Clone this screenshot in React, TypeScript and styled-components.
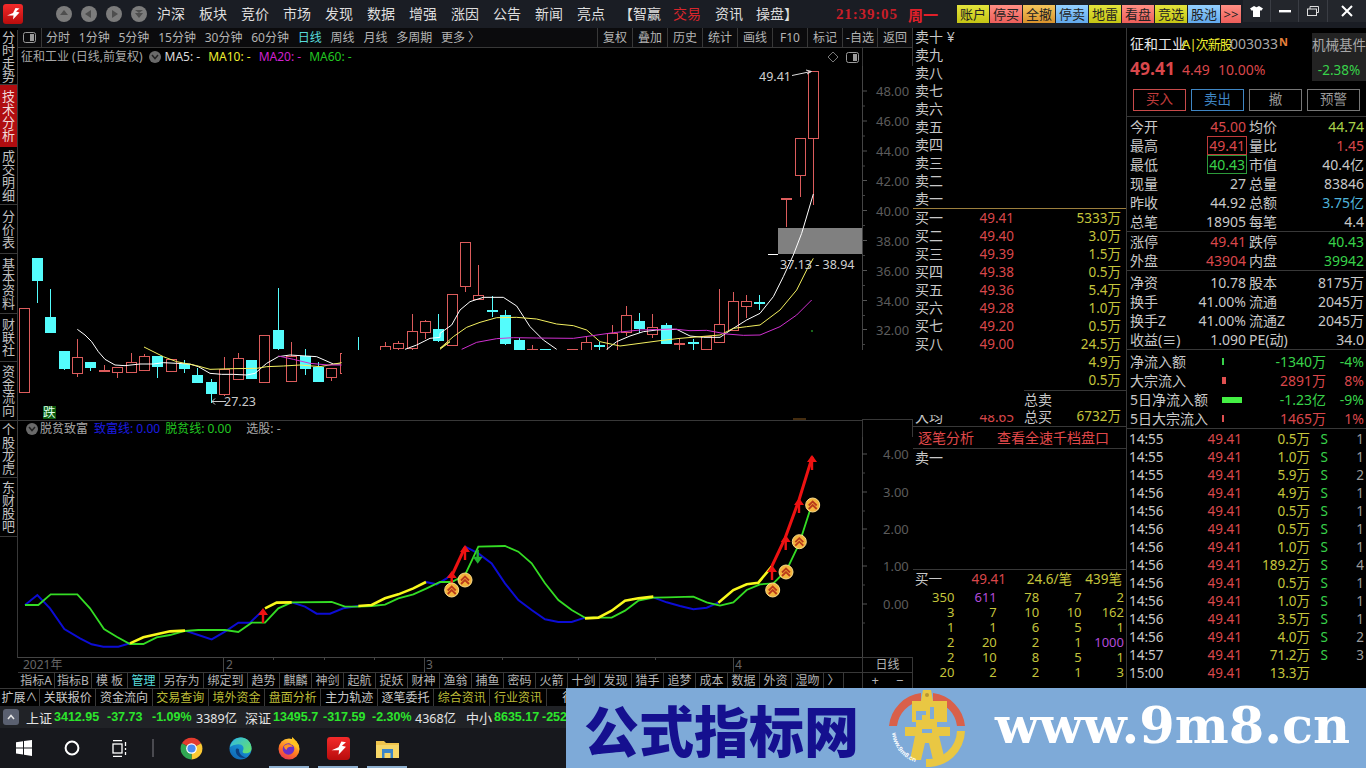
import React from 'react';
import styled, { createGlobalStyle } from 'styled-components';

const Global = createGlobalStyle`
  html, body { margin: 0; padding: 0; background: #000; overflow: hidden; }
  * { box-sizing: border-box; }
`;

const FONT = `"Noto Sans", "Noto Sans CJK SC", sans-serif`;
const RED = '#d9474b';
const GREEN = '#38d24a';
const YEL = '#c4c43c';
const TXT = '#c8c8c8';
const LINE = '#383838';

const Page = styled.div`
  position: relative; width: 1366px; height: 768px; overflow: hidden; background: #000;
  display: flex; flex-direction: column; font-family: ${FONT}; color: ${TXT}; font-size: 14px;
`;
const TitleBar = styled.header`
  height: 28px; flex: none; display: flex; align-items: center; background: #1a1d24; padding-left: 3px; position: relative;
`;
const NavDots = styled.div`display: flex; gap: 7px; margin-left: 32px;`;
const Menu = styled.nav`display: flex; gap: 14px; margin-left: 9px; align-items: center;`;
const MenuItem = styled.span<{ $red?: boolean; $ml?: number }>`
  font-size: 14px; line-height: 20px; white-space: nowrap; color: ${p => (p.$red ? '#d8262c' : '#dedede')}; margin-left: ${p => p.$ml ?? 0}px;
`;
const Clock = styled.span`
  font-family: "Liberation Serif", serif; font-weight: 700; font-size: 15px; color: #c81e28; letter-spacing: 0.85px; margin-left: 38px; width: 72px; white-space: nowrap;
`;
const Weekday = styled.span`font-size: 15px; font-weight: 700; color: #e0202a; width: 49px; white-space: nowrap;`;
const QuickBtns = styled.div`display: flex; gap: 1px;`;
const Quick = styled.span<{ $c: string; $w?: number }>`
  width: ${p => p.$w ?? 32}px; height: 18px; background: ${p => p.$c}; color: #222; font-size: 13px; line-height: 18px; text-align: center; white-space: nowrap;
`;
const WinBtns = styled.div`
  margin-left: 2px; height: 22px; width: 123px; align-self: flex-start; display: flex; background: #23262c;
`;
const WinBtn = styled.span<{ $w: number }>`
  width: ${p => p.$w}px; display: flex; align-items: center; justify-content: center; border-left: 1px solid #3a3d44;
  &:first-child { border-left: 0; }
`;
const Body = styled.div`height: 660px; flex: none; display: flex;`;
const SideNav = styled.aside`width: 18px; flex: none; display: flex; flex-direction: column; padding-top: 2px;`;
const SideRail = styled.div`flex: none; height: 628px; border-right: 1px solid ${LINE}; display: flex; flex-direction: column;`;
const SideItem = styled.div<{ $h: number; $on?: boolean }>`
  height: ${p => p.$h}px; flex: none; width: 17px; text-align: center; font-size: 13px; line-height: 13px; display: grid; align-content: center;
  word-break: break-all; color: ${p => (p.$on ? '#f0d8d8' : '#c0c0c0')}; background: ${p => (p.$on ? '#b00d10' : 'transparent')};
  border-bottom: 1px solid ${p => (p.$on ? 'transparent' : LINE)};
`;
const ChartCol = styled.section`width: 895px; flex: none; display: flex; flex-direction: column; border-right: 1px solid ${LINE};`;
const Toolbar = styled.div`height: 20px; flex: none; display: flex; align-items: center; background: #0b0b0d; border-bottom: 1px solid ${LINE}; font-size: 12px;`;
const ToggleCell = styled.div`width: 24px; height: 100%; border-right: 1px solid ${LINE}; display: flex; align-items: center; justify-content: center; margin-right: 4px;`;
const Periods = styled.div`display: flex; gap: 8.8px;`;
const Period = styled.span<{ $on?: boolean }>`color: ${p => (p.$on ? '#58dcdc' : '#b4b4b4')}; white-space: nowrap; line-height: 19px;`;
const ToolCells = styled.div`margin-left: auto; display: flex; height: 100%;`;
const ToolCell = styled.span`width: 35px; border-left: 1px solid ${LINE}; text-align: center; line-height: 19px; color: #b4b4b4; white-space: nowrap;`;
const InfoBar = styled.div`height: 18px; flex: none; display: flex; align-items: center; font-size: 12px; padding-left: 3px; width: 845px; border-right: 1px solid ${LINE}; position: relative;`;
const InfoText = styled.span<{ $c?: string; $ml?: number }>`color: ${p => p.$c ?? '#a8a8a8'}; margin-left: ${p => p.$ml ?? 0}px; white-space: nowrap; line-height: 18px;`;
const ChevronDot = styled.span`
  width: 12px; height: 12px; border-radius: 50%; background: #6a6a6a; margin-left: 6px; display: inline-flex; align-items: center; justify-content: center;
`;
const InfoTools = styled.span`position: absolute; right: 3px; top: 3px; display: flex; gap: 7px; align-items: center;`;
const PlotSvg = styled.svg`display: block; flex: none; background: #000; font-family: ${FONT};`;
const IndHead = styled.div`height: 17px; flex: none; display: flex; align-items: center; font-size: 12px; padding-left: 2px; width: 845px; border-top: 1px solid ${LINE}; border-right: 1px solid ${LINE};`;
const BottomRow = styled.div<{ $h: number }>`height: ${p => p.$h}px; flex: none; display: flex;`;
const RangeCell = styled.div`width: 50px; border-left: 1px solid ${LINE}; border-top: 1px solid ${LINE}; text-align: center; font-size: 12px; line-height: 14px; color: #b4b4b4;`;
const ZoomCell = styled.div`width: 50px; border-left: 1px solid ${LINE}; border-top: 1px solid ${LINE}; display: flex; color: #b4b4b4; font-size: 13px; line-height: 15px;`;
const ZoomBtn = styled.span`flex: 1; text-align: center;`;
const FormulaTabs = styled.div`width: 844px; flex: none; display: flex; border-top: 1px solid ${LINE}; font-size: 12px; overflow: hidden;`;
const FTab = styled.span<{ $w?: number; $on?: boolean }>`
  width: ${p => p.$w ?? 32}px; flex: none; text-align: center; line-height: 15px; color: ${p => (p.$on ? '#58dcdc' : '#b4b4b4')};
  border-right: 1px solid ${LINE}; white-space: nowrap;
`;
const BookCol = styled.section`width: 214px; flex: none; display: flex; flex-direction: column; border-right: 1px solid ${LINE};`;
const BookRow = styled.div<{ $h?: number }>`
  height: ${p => p.$h ?? 18}px; flex: none; display: grid; grid-template-columns: 48px 51px 1fr; align-items: center; padding: 0 5px 0 2px; line-height: 18px; position: relative; white-space: nowrap;
`;
const BookName = styled.span`color: #c8c8c8; font-size: 14px;`;
const BookPrice = styled.span`color: ${RED}; text-align: right; font-size: 13.5px;`;
const BookVol = styled.span`color: ${YEL}; text-align: right; font-size: 13.5px;`;
const BookSep = styled.div`height: 1px; flex: none; background: #9c7f3e;`;
const TotalCell = styled.div<{ $line?: boolean }>`
  grid-column: 3; margin-left: 10px; margin-right: -5px; padding-right: 5px; display: flex; justify-content: space-between; font-size: 14px; color: #c8c8c8; line-height: 17px;
  height: 18px; ${p => (p.$line ? `border-top: 1px solid ${LINE};` : '')}
`;
const TotalVol = styled.span`color: ${YEL}; font-size: 13.5px;`;
const RowCover = styled.div`position: absolute; left: 0; top: 0; width: 108px; height: 7px; background: #000;`;
const AnalysisTabs = styled.div`height: 23px; flex: none; display: flex; border-top: 1px solid ${LINE}; border-bottom: 1px solid ${LINE}; color: #e0484a; font-size: 14px; line-height: 21px; padding-left: 5px; gap: 23px;`;
const SellBox = styled.div`height: 120px; flex: none; padding: 0 0 0 2px; color: #c8c8c8; line-height: 18px;`;
const FlowHead = styled.div`height: 19px; flex: none; border-top: 1px solid ${LINE}; display: grid; grid-template-columns: 46px 45px 66px 1fr; align-items: center; padding: 0 4px 0 2px; font-size: 13.5px; line-height: 17px; white-space: nowrap;`;
const FlowCell = styled.span<{ $c: string; $r?: boolean }>`color: ${p => p.$c}; text-align: ${p => (p.$r ? 'right' : 'left')};`;
const OrderGrid = styled.div`display: grid; grid-template-columns: repeat(5, 42.4px); padding-top: 2px;`;
const OrderNum = styled.span<{ $m?: boolean }>`height: 15px; line-height: 15px; font-size: 13px; text-align: right; padding-right: 1px; color: ${p => (p.$m ? '#b34bd8' : YEL)};`;
const QuoteCol = styled.section`flex: 1; display: flex; flex-direction: column; min-width: 0;`;
const QuoteHead = styled.div`height: 58px; flex: none; display: flex; padding: 5px 0 0 3px;`;
const QuoteLeft = styled.div`flex: 1; min-width: 0;`;
const StockRow = styled.div`display: flex; align-items: center; height: 20px; white-space: nowrap;`;
const StockName = styled.span`color: #e8e8e8; font-size: 14px; width: 53px; flex: none;`;
const StockTag = styled.span`color: #eeee30; font-size: 13px; width: 48px; margin-left: -1px; flex: none; letter-spacing: -0.9px;`;
const StockCode = styled.span`color: #a8a8a8; font-size: 14px; width: 49px; flex: none;`;
const NewFlag = styled.span`color: #e8803c; font-size: 11px; font-weight: 700; margin-bottom: 3px;`;
const PriceRow = styled.div`display: flex; align-items: baseline; height: 24px; margin-top: 3px; white-space: nowrap; color: ${RED};`;
const BigPrice = styled.span`font-size: 17.5px; font-weight: 700; width: 52px;`;
const Change = styled.span`font-size: 14px; width: 36px;`;
const SectorBox = styled.div`width: 54px; height: 48px; background: #232323; text-align: center; font-size: 13.5px; line-height: 24px; color: #a8a8a8; white-space: nowrap; overflow: hidden;`;
const SectorPct = styled.div`color: ${GREEN}; font-size: 13.5px; margin-top: 1px;`;
const Actions = styled.div`height: 31px; flex: none; display: flex; gap: 5px; padding: 3px 0 0 6px; border-bottom: 1px solid ${LINE};`;
const ActionBtn = styled.span<{ $c: string; $t?: string }>`
  width: 53px; height: 22px; border: 1px solid ${p => p.$c}; text-align: center; color: ${p => p.$t ?? p.$c}; font-size: 13.5px; line-height: 19px;
`;
const QuoteBlock = styled.div<{ $pt?: number; $pb?: number }>`
  flex: none; padding: ${p => p.$pt ?? 0}px 2px ${p => p.$pb ?? 0}px 3px; border-bottom: 1px solid ${LINE};
`;
const QRow = styled.div`display: grid; grid-template-columns: 44px 72px 3px 44px 1fr; height: 19px; align-items: center; line-height: 19px; white-space: nowrap;`;
const QLabel = styled.span`color: #c8c8c8; font-size: 14px; &:nth-child(3) { grid-column: 4; }`;
const QVal = styled.span<{ $c?: string; $box?: string }>`
  color: ${p => p.$c ?? '#c8c8c8'}; text-align: right; font-size: 14px; justify-self: end; line-height: 17px;
  ${p => (p.$box ? `border: 1px solid ${p.$box}; padding: 0 1px; margin-right: -1px;` : '')}
`;
const FlowRow = styled.div`display: grid; grid-template-columns: 92px 52px 52px 38px; height: 19px; align-items: center; white-space: nowrap; line-height: 19px;`;
const FlowBar = styled.i<{ $c: string; $w: number }>`display: block; height: ${p => (p.$w > 4 ? 6 : 7)}px; width: ${p => p.$w}px; background: ${p => p.$c};`;
const TickList = styled.div`padding-top: 1px;`;
const TickRow = styled.div`display: grid; grid-template-columns: 40px 73px 68px 18px 1fr; height: 18px; align-items: center; padding: 0 2px; line-height: 18px; white-space: nowrap; font-size: 13.5px;`;
const TCell = styled.span<{ $c: string; $r?: boolean }>`color: ${p => p.$c}; text-align: ${p => (p.$r ? 'right' : 'left')};`;
const StatusTabs = styled.div`height: 18px; flex: none; display: flex; font-size: 12px; border-top: 1px solid ${LINE}; background: #000; overflow: hidden;`;
const STab = styled.span<{ $y?: boolean; $w?: number }>`
  flex: none; width: ${p => p.$w ?? 56.3}px; text-align: center; line-height: 18px; color: ${p => (p.$y ? '#bcbc38' : '#c8c8c8')}; border-right: 1px solid ${LINE}; white-space: nowrap;
`;
const Ticker = styled.div`height: 22px; flex: none; background: #202226; display: flex; align-items: center; padding-left: 3px; font-size: 12.5px; white-space: nowrap;`;
const TickerUp = styled.span`width: 16px; height: 16px; border-radius: 3px; background: #5a6070; display: flex; align-items: center; justify-content: center; margin-right: 7px;`;
const TName = styled.span`color: #e4e4e4; font-size: 13px; width: 28px;`;
const TNum = styled.span<{ $w: number }>`color: #2ce52c; font-family: "Liberation Sans", sans-serif; font-weight: 700; font-size: 12.5px; width: ${p => p.$w}px;`;
const TAmt = styled.span<{ $w: number }>`color: #e4e4e4; font-size: 12.5px; width: ${p => p.$w}px;`;
const Taskbar = styled.div`height: 40px; flex: none; background: #17181d; display: flex; align-items: center;`;
const TaskSlot = styled.div<{ $on?: boolean; $w?: number }>`
  width: ${p => p.$w ?? 49}px; height: 40px; display: flex; align-items: center; justify-content: center; position: relative; flex: none;
  ${p => (p.$on ? `&::after { content: ""; position: absolute; left: 4px; right: 5px; bottom: 0; height: 2px; background: #8fb0d0; }` : '')}
`;
const TaskDivider = styled.span`width: 2px; height: 18px; background: #4a4a50; margin: 0 12.5px 0 8px; flex: none;`;
const Watermark = styled.div`
  position: absolute; left: 566px; top: 688px; width: 800px; height: 80px; background: #7eaad8; display: flex; align-items: center;
`;
const WmTitle = styled.span`
  margin-left: 18px; font-family: "Noto Sans CJK SC", sans-serif; font-weight: 900; font-size: 55px; line-height: 80px; color: #15108f; white-space: nowrap; width: 304px; flex: none;
`;
const WmUrl = styled.span`
  margin-left: 29px; font-family: "DejaVu Serif", serif; font-weight: 700; font-size: 51px; line-height: 72px; height: 78px; color: #fff; white-space: nowrap; flex: none;
`;
const WmMark = styled.div`width: 78px; height: 78px; flex: none;`;

type C = [number, number, number, number, number, 'r' | 'c'];
// centre x, body top, body bottom, wick top, wick bottom
const candles: C[] = [
  [24.5, 308, 392, 308, 392, 'r'], [37.5, 258, 280, 258, 303, 'c'], [50.5, 317, 332, 289, 332, 'c'], [64.5, 351, 368, 351, 370, 'c'],
  [77.5, 357, 373, 339, 377, 'r'], [90.5, 362, 367, 362, 371, 'c'], [104.5, 370, 372, 365, 372, 'r'], [117.5, 367, 372, 367, 378, 'r'],
  [131.5, 362, 372, 353, 373, 'r'], [144.5, 356, 370, 354, 370, 'r'], [157.5, 356, 366, 356, 378, 'c'], [171.5, 359, 371, 359, 371, 'r'],
  [184.5, 364, 368, 360, 373, 'c'], [197.5, 375, 382, 368, 382, 'c'], [211.5, 382, 393, 379, 403, 'c'], [224.5, 369, 394, 357, 396, 'r'],
  [238.5, 358, 379, 353, 379, 'r'], [251.5, 360, 378, 360, 378, 'c'], [264.5, 335, 382, 335, 382, 'r'], [278.5, 330, 348, 288, 350, 'c'],
  [291.5, 356, 381, 342, 381, 'r'], [305.5, 356, 368, 349, 375, 'c'], [318.5, 367, 381, 362, 381, 'c'], [331.5, 368, 377, 368, 381, 'r'],
  [345.5, 353, 373, 353, 373, 'r'], [358.5, 360, 372, 337, 372, 'c'], [385.5, 346, 360, 342, 360, 'r'], [398.5, 343, 348, 341, 350, 'r'],
  [412.5, 331, 348, 314, 350, 'r'], [425.5, 321, 332, 320, 339, 'r'], [438.5, 329, 340, 314, 342, 'c'], [452.5, 294, 345, 294, 346, 'r'],
  [465.5, 242, 286, 242, 292, 'r'], [478.5, 295, 299, 265, 299, 'r'], [492.5, 310, 312, 296, 317, 'c'], [505.5, 315, 343, 310, 345, 'c'],
  [519.5, 340, 360, 338, 360, 'c'], [532.5, 349, 360, 345, 360, 'r'], [545.5, 349, 360, 349, 360, 'c'], [572.5, 349, 360, 349, 360, 'r'],
  [586.5, 342, 360, 337, 360, 'r'], [599.5, 345, 347, 342, 360, 'c'], [612.5, 333, 360, 325, 360, 'r'], [626.5, 315, 332, 306, 336, 'r'],
  [639.5, 321, 328, 313, 333, 'c'], [652.5, 327, 334, 314, 338, 'r'], [666.5, 325, 343, 323, 343, 'c'], [679.5, 343, 345, 338, 360, 'r'],
  [693.5, 342, 344, 339, 360, 'c'], [706.5, 336, 349, 336, 349, 'r'], [719.5, 324, 342, 289, 342, 'r'], [733.5, 301, 330, 292, 330, 'r'],
  [746.5, 301, 306, 295, 318, 'r'], [759.5, 302, 304, 295, 310, 'c'], [786.5, 198, 200, 199, 227, 'r'], [800.5, 138, 175, 138, 197, 'r'],
  [813.5, 71, 138, 71, 205, 'r'],
];

const zm = (pts: number[][], ox: number, oy: number) => pts.map(([x, y]) => `${ox + x / 3},${oy + y / 3}`).join(' ');
const A = (pts: number[][]) => zm(pts, 0, 220);
const B = (pts: number[][]) => zm(pts, 440, 220);
const L = (pts: number[][]) => zm(pts, 0, 440);
const R = (pts: number[][]) => zm(pts, 440, 440);

const ma5 = [
  A([[232, 328], [255, 345], [275, 365], [295, 395], [315, 418], [345, 435], [375, 437], [420, 432], [460, 432], [490, 428], [530, 430], [570, 432], [595, 440], [630, 460], [665, 463], [700, 463], [740, 465], [765, 460], [800, 430], [835, 410], [870, 405], [950, 410], [1000, 432], [1020, 432]]),
  A([[1215, 388], [1250, 375], [1290, 355], [1320, 352]]) + ' ' + B([[0, 340], [35, 315], [60, 270], [90, 245], [130, 232], [190, 232], [230, 258], [270, 320], [310, 360], [350, 388]]),
  B([[500, 388], [530, 365], [570, 348], [610, 335], [650, 330], [710, 328], [750, 348], [790, 352], [840, 352], [880, 325], [920, 300], [960, 280], [1000, 230], [1030, 170], [1060, 105], [1085, 40], [1097, 0], [1120, -78]]),
];
const ma10 = [
  A([[432, 381], [490, 410], [530, 425], [590, 437], [630, 448], [700, 446], [770, 445], [800, 440], [850, 438], [900, 435], [960, 440], [1025, 428]]),
  A([[1320, 388], [1350, 365]]) + ' ' + B([[0, 385], [40, 350], [80, 322], [120, 307], [170, 293], [230, 292], [290, 297], [350, 312], [400, 317], [440, 330], [480, 365], [540, 378], [600, 370], [660, 362], [720, 355], [780, 350], [840, 345], [880, 325], [920, 320], [960, 315], [1020, 270], [1070, 210], [1100, 150], [1120, 115]]),
];
const ma20 = [
  A([[835, 408], [880, 418], [930, 430], [985, 435], [1025, 435]]),
  B([[65, 388], [110, 367], [170, 356], [220, 353], [290, 354], [400, 355], [450, 348], [520, 338], [600, 330], [700, 327], [750, 332], [800, 331], [860, 342], [910, 346], [960, 345], [1020, 320], [1070, 285], [1115, 240]]),
];

const blue = [
  L([[75, 495], [112, 465], [150, 505], [193, 567], [240, 595], [275, 613], [310, 620], [355, 620], [390, 610]]),
  L([[555, 572], [595, 585], [635, 598], [675, 575], [715, 548], [750, 548], [790, 510]]),
  L([[875, 487], [915, 500], [950, 521], [990, 521], [1030, 505], [1075, 498]]),
  L([[1278, 426], [1310, 433], [1340, 415], [1355, 400]]),
  R([[75, 320], [115, 340], [155, 370], [195, 430], [235, 480], [275, 510], [315, 538], [355, 546], [395, 546], [435, 533]]),
  R([[640, 472], [680, 487], [720, 498], [760, 508], [800, 503], [835, 488]]),
];
const green =
  L([[75, 495], [115, 495], [152, 463], [232, 463], [270, 505], [312, 567], [350, 590], [390, 612], [430, 612], [470, 592], [510, 585], [555, 573], [595, 570], [675, 570], [715, 576], [755, 548], [795, 548], [835, 505], [875, 487], [995, 486], [1035, 500], [1075, 500], [1115, 498], [1155, 494], [1195, 475], [1240, 463], [1280, 445], [1320, 426]]) +
  ' ' + R([[0, 426], [35, 426], [75, 405], [115, 320], [195, 318], [235, 335], [275, 370], [315, 430], [355, 480], [395, 510], [435, 533], [515, 533], [555, 512], [595, 482], [640, 473], [680, 472], [760, 470], [800, 487], [840, 497], [880, 487], [920, 450], [960, 433], [1000, 430], [1040, 390], [1078, 310], [1115, 195]]);
const yellow = [
  L([[390, 610], [430, 592], [470, 583], [510, 574], [555, 572]]),
  L([[795, 505], [830, 488], [875, 487]]),
  L([[1075, 498], [1115, 495], [1155, 475], [1195, 463], [1240, 445], [1278, 426]]),
  R([[435, 535], [475, 533], [515, 512], [555, 482], [595, 475], [640, 470]]),
  R([[835, 488], [880, 450], [920, 433], [955, 428], [995, 380]]),
];
const red = [
  R([[35, 408], [75, 322]]),
  R([[995, 380], [1035, 295], [1077, 180], [1117, 50]]),
];
const upArrows = [[263, 615], [451.7, 578], [465, 552], [772, 572], [785.7, 542], [799, 505], [812, 462]];
const coins = [[451.7, 590], [465, 580], [772.7, 590], [786, 572], [799.3, 541.7], [812.7, 505]];

const MainPlot = () => (
  <PlotSvg width={895} height={354} viewBox="18 66 895 354">
    {[91, 121, 151, 180.5, 210.5, 240.5, 270.5, 300.5, 329.5].map((y, i) => (
      <g key={y}>
        <line x1={862} x2={867} y1={y} y2={y} stroke="#555" />
        <line x1={862} x2={865} y1={y + 15} y2={y + 15} stroke="#444" />
        <text x={876} y={y + 5} fontSize={13} fill="#5c5c5c">{`${48 - i * 2}.00`}</text>
      </g>
    ))}
    <line x1={862.5} x2={862.5} y1={66} y2={350} stroke="#444" />
    {candles.map(([x, t, b, wt, wb, k], i) => {
      const col = k === 'r' ? '#dc5c5c' : '#54fcfc';
      const flat = b - t <= 2;
      return (
        <g key={i} shapeRendering="crispEdges">
          <line x1={x} x2={x} y1={wt} y2={wb} stroke={col} />
          {flat ? (
            <rect x={x - 5.5} y={t} width={11} height={2} fill={col} />
          ) : (
            <rect x={x - 5} y={t + 0.5} width={10} height={b - t} fill={k === 'r' ? '#000' : col} stroke={col} />
          )}
        </g>
      );
    })}
    <line x1={768} x2={778} y1={254.5} y2={254.5} stroke="#fff" />
    <rect x={778} y={228} width={84} height={26} fill="#808080" />
    {ma5.map((p, i) => <polyline key={i} points={p} fill="none" stroke="#fff" strokeWidth={1} />)}
    {ma10.map((p, i) => <polyline key={i} points={p} fill="none" stroke="#f4f060" strokeWidth={1} />)}
    {ma20.map((p, i) => <polyline key={i} points={p} fill="none" stroke="#d030d0" strokeWidth={1} />)}
    <line x1={811} x2={813} y1={331} y2={331} stroke="#3c3" />
    <text x={780} y={269} fontSize={12.5} fill="#d0d0d0">37.13 - 38.94</text>
    <text x={759} y={81} fontSize={12.5} fill="#d0d0d0">49.41</text>
    <path d="M792 75.5 L811 71.5 M806 70 L811.5 71.5 L807 74" fill="none" stroke="#ddd" />
    <path d="M226 401.5 H212 M215 398.5 L212 401.5 L215 404.5" fill="none" stroke="#ccc" />
    <text x={224} y={406} fontSize={12.5} fill="#c8c8c8">27.23</text>
    <rect x={342} y={350} width={571} height={70} fill="#000" />
    <rect x={43} y={406} width={13} height={13} fill="#0c5a0c" />
    <text x={43} y={417} fontSize={12.5} fill="#dfe">跌</text>
    <line x1={793} x2={806} y1={419} y2={419} stroke="#8a5a20" />
    <line x1={862} x2={913} y1={419.5} y2={419.5} stroke="#383838" />
  </PlotSvg>
);

const Coin = ({ x, y }: { x: number; y: number }) => (
  <g transform={`translate(${x} ${y})`}>
    <circle r={7} fill="#f4b43c" stroke="#f9dc8c" strokeWidth={1} />
    <path d="M-4 0.5 L0 -3.5 L4 0.5 M-4 4 L0 0 L4 4" fill="none" stroke="#b93a1a" strokeWidth={1.8} />
  </g>
);

const IndicatorPlot = () => (
  <PlotSvg width={895} height={220} viewBox="18 437 895 220">
    <line x1={862.5} x2={862.5} y1={437} y2={657} stroke="#444" />
    {[[454, '4.00'], [492, '3.00'], [529, '2.00'], [566, '1.00'], [604, '0.00']].map(([y, t]) => (
      <g key={t as string}>
        <line x1={862} x2={867} y1={y as number} y2={y as number} stroke="#555" />
        <line x1={862} x2={865} y1={(y as number) + 19} y2={(y as number) + 19} stroke="#444" />
        <text x={883} y={(y as number) + 5} fontSize={13} fill="#5c5c5c">{t}</text>
      </g>
    ))}
    {blue.map((p, i) => <polyline key={i} points={p} fill="none" stroke="#0c0cd4" strokeWidth={2} />)}
    <polyline points={green} fill="none" stroke="#34dc24" strokeWidth={1.8} />
    {yellow.map((p, i) => <polyline key={i} points={p} fill="none" stroke="#f8f81c" strokeWidth={2.6} />)}
    {red.map((p, i) => <polyline key={i} points={p} fill="none" stroke="#ee1212" strokeWidth={3} />)}
    {upArrows.map(([x, y]) => (
      <path key={x} transform={`translate(${x} ${y})`} d="M0 -7 L5 0 H1.2 V8 H-1.2 V0 H-5 Z" fill="#ee1212" />
    ))}
    <path transform="translate(477.7 556.7)" d="M0 7 L5 0 H1.2 V-7 H-1.2 V0 H-5 Z" fill="#20b030" />
    {coins.map(([x, y]) => <Coin key={x} x={x} y={y} />)}
  </PlotSvg>
);

const DateAxis = () => (
  <PlotSvg width={844} height={15} viewBox="18 657 844 15">
    <line x1={18} x2={862} y1={657.5} y2={657.5} stroke="#444" />
    {[223, 273, 324, 374, 424, 502, 578, 655, 733].map(x => <line key={x} x1={x + 0.5} x2={x + 0.5} y1={657} y2={[223, 424, 733].includes(x) ? 672 : 660} stroke="#444" />)}
    <text x={23} y={669} fontSize={12} fill="#666">2021年</text>
    <text x={226} y={669} fontSize={12} fill="#666">2</text>
    <text x={426} y={669} fontSize={12} fill="#666">3</text>
    <text x={735} y={669} fontSize={12} fill="#666">4</text>
  </PlotSvg>
);

const AppLogo = ({ s = 20, id = 'logoG' }: { s?: number; id?: string }) => (
  <svg width={s} height={s} viewBox="0 0 20 20">
    <defs>
      <linearGradient id={id} x1="0" y1="0" x2="0" y2="1"><stop offset="0" stopColor="#f42a2a" /><stop offset="1" stopColor="#b80c0c" /></linearGradient>
    </defs>
    <rect width="20" height="20" rx="3" fill={`url(#${id})`} />
    <path d="M4 11.5 L10 9 L12.5 4 L16.5 4.5 L13 7.5 L16.5 8.5 L10 15.5 L10.5 11.5 Z" fill="#fff" />
  </svg>
);
const NavDot = ({ d }: { d: string }) => (
  <svg width={18} height={18} viewBox="0 0 18 18">
    <circle cx="9" cy="9" r="8" fill="#7c7c7c" />
    <path d={d} fill="#4e4e4e" />
  </svg>
);
const Toggle = () => (
  <svg width={13} height={11} viewBox="0 0 13 11">
    <rect x="0.5" y="0.5" width="12" height="10" rx="2" fill="none" stroke="#9a9a9a" />
    <rect x="7" y="2" width="4" height="7" fill="#9a9a9a" />
  </svg>
);
const Chevron = ({ c = '#222', up }: { c?: string; up?: boolean }) => (
  <svg width={8} height={6} viewBox="0 0 8 6"><path d={up ? 'M1 5 L4 1.5 L7 5' : 'M1 1 L4 4.5 L7 1'} fill="none" stroke={c} strokeWidth={1.5} /></svg>
);

const WinIcon = () => (
  <svg width={16} height={16} viewBox="0 0 16 16" fill="#fff"><path d="M0 2.2 L7 1.2 V7.4 H0 Z M8 1 L16 0 V7.4 H8 Z M0 8.4 H7 V14.6 L0 13.6 Z M8 8.4 H16 V16 L8 14.8 Z" /></svg>
);
const CortanaIcon = () => (<svg width={16} height={16} viewBox="0 0 16 16"><circle cx="8" cy="8" r="6.4" fill="none" stroke="#fff" strokeWidth="2" /></svg>);
const TaskViewIcon = () => (
  <svg width={17} height={17} viewBox="0 0 17 17" fill="none" stroke="#fff" strokeWidth="1.3"><path d="M1 0.7 H10 M1 16.3 H10" /><rect x="1" y="4" width="9" height="9" /><path d="M13.5 2 V6 M13.5 8 V10 M13.5 12 V15 " /></svg>
);
const ChromeIcon = () => (
  <svg width={23} height={23} viewBox="0 0 24 24">
    <path d="M12 12 L2 6.5 A11.5 11.5 0 0 1 22 6.5 Z" fill="#e33b2e" />
    <path d="M12 12 L22 6.5 A11.5 11.5 0 0 1 12 23.5 Z" fill="#fcc934" />
    <path d="M12 12 L12 23.5 A11.5 11.5 0 0 1 2 6.5 Z" fill="#30a853" />
    <circle cx="12" cy="12" r="5.6" fill="#fff" /><circle cx="12" cy="12" r="4.3" fill="#4a8af0" />
  </svg>
);
const EdgeIcon = () => (
  <svg width={23} height={23} viewBox="0 0 24 24">
    <defs><linearGradient id="edgeG" x1="0" y1="1" x2="0.6" y2="0"><stop offset="0" stopColor="#0f5fae" /><stop offset="1" stopColor="#1ba6e4" /></linearGradient>
    <linearGradient id="edgeH" x1="0" y1="0" x2="1" y2="0.8"><stop offset="0" stopColor="#2fb8e8" /><stop offset="1" stopColor="#63e070" /></linearGradient></defs>
    <circle cx="12" cy="12" r="11.5" fill="url(#edgeG)" />
    <path d="M1 10.5 C2.5 4.5 7 0.5 12.5 0.5 C19 0.5 23.5 6 23.5 12 C23.5 15 21 17 17.5 17 C15 17 13.5 16 14.5 14 C16.5 11 14 7 9.5 7.5 C5.5 8 2.5 9 1 10.5 Z" fill="url(#edgeH)" />
    <path d="M7 14 C7 19 12 23 18 21.5 C13.5 20.5 10 17 10.5 13 C9 11.5 7 12 7 14 Z" fill="#0b3f80" />
  </svg>
);
const FirefoxIcon = () => (
  <svg width={24} height={24} viewBox="0 0 24 24">
    <defs><linearGradient id="ffG" x1="0.7" y1="0" x2="0.2" y2="1"><stop offset="0" stopColor="#ffd43a" /><stop offset="0.55" stopColor="#ff7a20" /><stop offset="1" stopColor="#e62c5c" /></linearGradient></defs>
    <circle cx="12" cy="13" r="10.5" fill="url(#ffG)" />
    <circle cx="11.5" cy="13" r="5.8" fill="#6b2fc8" />
    <path d="M15 1 C20 5 23 10 22 15 C20 11 17 9 13 8 C15 6 15 3 15 1 Z" fill="#ffc31f" />
    <path d="M7 10 C10 7 15 8 16 11 C13 10 10 11 9.5 14 C8 13 7 12 7 10 Z" fill="#ff9124" />
  </svg>
);
const FolderIcon = () => (
  <svg width={23} height={21} viewBox="0 0 23 21">
    <path d="M0 3 H8 L10 5 H23 V20 H0 Z" fill="#f0c44c" />
    <rect x="0" y="7" width="23" height="13" fill="#f7d768" />
    <rect x="6" y="11" width="11" height="9" fill="#3c86c8" />
    <rect x="8.5" y="15" width="6" height="5" fill="#f7d768" />
  </svg>
);
const WmLogo = () => (
  <svg width={78} height={78} viewBox="0 0 78 78">
    <defs><path id="wmArc" d="M4 44 A35 35 0 0 0 34 75" /></defs>
    <path d="M33 4 A37 37 0 0 0 1 37 L9 37 A29 29 0 0 1 33 12 Z" fill="#d9604a" />
    <path d="M45 4 A37 37 0 0 1 77 37 L69 37 A29 29 0 0 0 45 12 Z" fill="#d9604a" />
    <path d="M77 42 A37 37 0 0 1 38 78 L38 70 A29 29 0 0 0 69 42 Z" fill="#e9c743" />
    <path d="M35 1 H43 L45 12 H59 V33 H49 V38 H62 V47 H51 L57 71 H45 L41 54 H37 L33 71 H22 L27 47 H17 V38 H28 V33 H24 V12 H33 Z" fill="#e9c743" />
    <circle cx="39" cy="6" r="2" fill="#b89632" />
    <path d="M28 22 H38 V26 H34 V31 H28 Z M42 18 H46 V30 H42 Z M34 40 H44 V44 H34 Z" fill="#7eaad8" />
    <text fontSize="6.5" fill="#fff" fontFamily="Liberation Sans, sans-serif" fontWeight="700"><textPath href="#wmArc">www.9m8.cn</textPath></text>
  </svg>
);

const sideItems: [string, number, boolean?][] = [['分时走势', 55], ['技术分析', 62, true], ['成交明细', 58], ['分价表', 49], ['基本资料', 60], ['财联社', 48], ['资金流向', 59], ['个股龙虎', 57], ['东财股吧', 59]];
const menus = ['沪深', '板块', '竞价', '市场', '发现', '数据', '增强', '涨因', '公告', '新闻', '亮点', '【智赢'];
const Y = 'linear-gradient(#e4e43c,#c4c414)';
const P = 'linear-gradient(#ff8f84,#ec5e5a)';
const O = 'linear-gradient(#f4c55c,#d9922c)';
const BL = 'linear-gradient(#94d0ff,#62a9ec)';
const quick: [string, string][] = [['账户', Y], ['停买', P], ['全撤', O], ['停卖', BL], ['地雷', Y], ['看盘', P], ['竞选', Y], ['股池', BL]];
const periods = ['1分钟', '5分钟', '15分钟', '30分钟', '60分钟'];
const tools = ['复权', '叠加', '历史', '统计', '画线', 'F10', '标记', '-自选', '返回'];
const fTabs: [string, number?, boolean?][] = [['指标A', 37], ['指标B', 37], ['模 板', 36], ['管理', 32, true], ['另存为', 44], ['绑定到', 44],
  ['趋势'], ['麒麟'], ['神剑'], ['起航'], ['捉妖'], ['财神'], ['渔翁'], ['捕鱼'], ['密码'], ['火箭'], ['十剑'], ['发现'], ['猎手'], ['追梦'], ['成本'], ['数据'], ['外资'], ['湿吻'], ['〉', 20]];
const sells = ['卖十 ¥', '卖九', '卖八', '卖七', '卖六', '卖五', '卖四', '卖三', '卖二', '卖一'];
const buys = [['买一', '49.41', '5333万'], ['买二', '49.40', '3.0万'], ['买三', '49.39', '1.5万'], ['买四', '49.38', '0.5万'], ['买五', '49.36', '5.4万'], ['买六', '49.28', '1.0万'], ['买七', '49.20', '0.5万'], ['买八', '49.00', '24.5万'], ['', '', '4.9万'], ['', '', '0.5万']];
const orders = [['350', '611*', '78', '7', '2'], ['3', '7', '10', '10', '162'], ['1', '1', '6', '5', '1'], ['2', '20', '2', '1', '1000*'], ['2', '10', '8', '5', '1'], ['20', '2', '2', '1', '3']];
type Q = [string, string, string?, string?];
const W = '#c8c8c8';
const QRowView = ({ a, b }: { a: Q; b: Q }) => (
  <QRow>
    <QLabel>{a[0]}</QLabel>
    <QVal $c={a[2]} $box={a[3]}>{a[1]}</QVal>
    <QLabel>{b[0]}</QLabel>
    <QVal $c={b[2]} $box={b[3]}>{b[1]}</QVal>
  </QRow>
);
const block1: [Q, Q][] = [
  [['今开', '45.00', RED], ['均价', '44.74', '#a9d24a']],
  [['最高', '49.41', RED, '#c03a3a'], ['量比', '1.45', RED]],
  [['最低', '40.43', GREEN, '#2c9a3a'], ['市值', '40.4亿', W]],
  [['现量', '27', W], ['总量', '83846', W]],
  [['昨收', '44.92', W], ['总额', '3.75亿', '#4fb4dc']],
  [['总笔', '18905', W], ['每笔', '4.4', W]],
];
const block2: [Q, Q][] = [
  [['涨停', '49.41', RED], ['跌停', '40.43', GREEN]],
  [['外盘', '43904', RED], ['内盘', '39942', GREEN]],
];
const block3: [Q, Q][] = [
  [['净资', '10.78', W], ['股本', '8175万', W]],
  [['换手', '41.00%', W], ['流通', '2045万', W]],
  [['换手Z', '41.00%', W], ['流通Z', '2045万', W]],
  [['收益(≡)', '1.090', W], ['PE(动)', '34.0', W]],
];
const flows: [string, string, number, string, string][] = [
  ['净流入额', GREEN, 2, '-1340万', '-4%'],
  ['大宗流入', '#e05050', 4, '2891万', '8%'],
  ['5日净流入额', '#44f044', 20, '-1.23亿', '-9%'],
  ['5日大宗流入', '#e05050', 2, '1465万', '1%'],
];
const ticks = [['14:55', '0.5万', '1'], ['14:55', '1.0万', '1'], ['14:55', '5.9万', '2'], ['14:56', '4.9万', '1'], ['14:56', '0.5万', '1'], ['14:56', '0.5万', '1'], ['14:56', '1.0万', '1'], ['14:56', '189.2万', '4'], ['14:56', '0.5万', '1'], ['14:56', '1.0万', '1'], ['14:56', '3.5万', '1'], ['14:56', '4.0万', '2'], ['14:57', '71.2万', '3'], ['15:00', '13.3万', '']];
const sTabs: [string, boolean?][] = [['关联报价'], ['资金流向'], ['交易查询', true], ['境外资金', true], ['盘面分析', true], ['主力轨迹'], ['逐笔委托'], ['综合资讯', true], ['行业资讯', true], ['行业']];

export default function App() {
  return (
    <Page>
      <Global />
      <TitleBar>
        <AppLogo />
        <NavDots>
          <NavDot d="M9 5 L13 10 H5 Z" />
          <NavDot d="M5 9 L11 5 V13 Z" />
          <NavDot d="M13 9 L7 5 V13 Z" />
          <NavDot d="M9 13 L5 8 H13 Z M5 5 H13 L9 8 Z" />
        </NavDots>
        <Menu>
          {menus.map(m => <MenuItem key={m}>{m}</MenuItem>)}
          <MenuItem $red $ml={-2}>交易</MenuItem>
          <MenuItem>资讯</MenuItem>
          <MenuItem $ml={-1}>操盘】</MenuItem>
        </Menu>
        <Clock>21:39:05</Clock>
        <Weekday>周一</Weekday>
        <QuickBtns>
          {quick.map(([t, c]) => <Quick key={t} $c={c}>{t}</Quick>)}
          <Quick $c={P} $w={20}>&gt;&gt;</Quick>
        </QuickBtns>
        <WinBtns>
          <WinBtn $w={27}>
            <svg width={13} height={11} viewBox="0 0 13 11" fill="#fff"><path d="M4 0 L6.5 1.2 L9 0 L13 2.5 L11 5 L10 4 V11 H3 V4 L2 5 L0 2.5 Z" /></svg>
          </WinBtn>
          <WinBtn $w={28}><svg width={12} height={4} viewBox="0 0 12 4"><rect width="12" height="2.4" y="1" fill="#fff" /></svg></WinBtn>
          <WinBtn $w={29}><svg width={12} height={10} viewBox="0 0 12 10" fill="none" stroke="#ddd"><rect x="0.5" y="3" width="9" height="6.5" /><path d="M3 3 V0.5 H11.5 V6.5 H9.5" /></svg></WinBtn>
          <WinBtn $w={39}><svg width={12} height={12} viewBox="0 0 12 12"><path d="M1 1 L11 11 M11 1 L1 11" stroke="#fff" strokeWidth="2" /></svg></WinBtn>
        </WinBtns>
      </TitleBar>
      <Body>
        <SideNav>
          <SideRail>
            {sideItems.map(([t, h, on]) => <SideItem key={t} $h={h} $on={on}>{t}</SideItem>)}
          </SideRail>
        </SideNav>
        <ChartCol>
          <Toolbar>
            <ToggleCell><Toggle /></ToggleCell>
            <Periods>
              <Period>分时</Period>
              {periods.map(p => <Period key={p}>{p}</Period>)}
              <Period $on>日线</Period>
              <Period>周线</Period>
              <Period>月线</Period>
              <Period>多周期</Period>
              <Period>更多 〉</Period>
            </Periods>
            <ToolCells>{tools.map(t => <ToolCell key={t}>{t}</ToolCell>)}</ToolCells>
          </Toolbar>
          <InfoBar>
            <InfoText>征和工业 (日线,前复权)</InfoText>
            <ChevronDot><Chevron /></ChevronDot>
            <InfoText $c="#dcdcdc" $ml={4}>MA5: -</InfoText>
            <InfoText $c="#eeee30" $ml={8}>MA10: -</InfoText>
            <InfoText $c="#d020d0" $ml={8}>MA20: -</InfoText>
            <InfoText $c="#22c822" $ml={8}>MA60: -</InfoText>
            <InfoTools>
              <svg width={12} height={12} viewBox="0 0 12 12"><path d="M6 1 L11 6 L6 11 L1 6 Z" fill="none" stroke="#777" /></svg>
              <Toggle />
            </InfoTools>
          </InfoBar>
          <MainPlot />
          <IndHead>
            <ChevronDot><Chevron /></ChevronDot>
            <InfoText $ml={2}>脱贫致富</InfoText>
            <InfoText $c="#1c1ce0" $ml={6}>致富线: 0.00</InfoText>
            <InfoText $c="#22c822" $ml={5}>脱贫线: 0.00</InfoText>
            <InfoText $c="#a8a8a8" $ml={15}>选股: -</InfoText>
          </IndHead>
          <IndicatorPlot />
          <BottomRow $h={15}>
            <DateAxis />
            <RangeCell>日线</RangeCell>
          </BottomRow>
          <BottomRow $h={16}>
            <FormulaTabs>
              {fTabs.map(([t, w, on]) => <FTab key={t} $w={w} $on={on}>{t}</FTab>)}
            </FormulaTabs>
            <ZoomCell><ZoomBtn>+</ZoomBtn><ZoomBtn>−</ZoomBtn></ZoomCell>
          </BottomRow>
        </ChartCol>
        <BookCol>
          {sells.map(s => <BookRow key={s}><BookName>{s}</BookName></BookRow>)}
          <BookSep />
          {buys.map(([n, p, v], i) => (
            <BookRow key={i}><BookName>{n}</BookName><BookPrice>{p}</BookPrice><BookVol>{v}</BookVol></BookRow>
          ))}
          <BookRow $h={19}><TotalCell $line>总卖</TotalCell></BookRow>
          <BookRow>
            <BookName>大均</BookName>
            <BookPrice>48.65</BookPrice>
            <TotalCell>总买<TotalVol>6732万</TotalVol></TotalCell>
            <RowCover />
          </BookRow>
          <AnalysisTabs><span>逐笔分析</span><span>查看全速千档盘口</span></AnalysisTabs>
          <SellBox>卖一</SellBox>
          <FlowHead>
            <FlowCell $c="#c8c8c8">买一</FlowCell>
            <FlowCell $c={RED} $r>49.41</FlowCell>
            <FlowCell $c={YEL} $r>24.6/笔</FlowCell>
            <FlowCell $c={YEL} $r>439笔</FlowCell>
          </FlowHead>
          <OrderGrid>
            {orders.flat().map((o, i) => <OrderNum key={i} $m={o.endsWith('*')}>{o.replace('*', '')}</OrderNum>)}
          </OrderGrid>
        </BookCol>
        <QuoteCol>
          <QuoteHead>
            <QuoteLeft>
              <StockRow>
                <StockName>征和工业</StockName>
                <StockTag>A|次新股</StockTag>
                <StockCode>003033</StockCode>
                <NewFlag>N</NewFlag>
              </StockRow>
              <PriceRow>
                <BigPrice>49.41</BigPrice>
                <Change>4.49</Change>
                <Change>10.00%</Change>
              </PriceRow>
            </QuoteLeft>
            <SectorBox>机械基件<SectorPct>-2.38%</SectorPct></SectorBox>
          </QuoteHead>
          <Actions>
            <ActionBtn $c="#c84a4a" $t="#c03c3c">买入</ActionBtn>
            <ActionBtn $c="#3f86c4" $t="#3f86c4">卖出</ActionBtn>
            <ActionBtn $c="#777" $t="#999">撤</ActionBtn>
            <ActionBtn $c="#777" $t="#999">预警</ActionBtn>
          </Actions>
          <QuoteBlock>{block1.map(([a, b]) => <QRowView key={a[0]} a={a} b={b} />)}</QuoteBlock>
          <QuoteBlock>{block2.map(([a, b]) => <QRowView key={a[0]} a={a} b={b} />)}</QuoteBlock>
          <QuoteBlock $pt={2}>{block3.map(([a, b]) => <QRowView key={a[0]} a={a} b={b} />)}</QuoteBlock>
          <QuoteBlock $pt={2}>
            {flows.map(([n, c, w, v, p]) => {
              const neg = v.startsWith('-');
              const col = neg ? GREEN : RED;
              return (
                <FlowRow key={n}>
                  <QLabel>{n}</QLabel>
                  <FlowBar $c={c} $w={w} />
                  <FlowCell $c={col} $r>{v}</FlowCell>
                  <FlowCell $c={col} $r>{p}</FlowCell>
                </FlowRow>
              );
            })}
          </QuoteBlock>
          <TickList>
            {ticks.map(([t, v, n], i) => (
              <TickRow key={i}>
                <TCell $c="#c8c8c8">{t}</TCell>
                <TCell $c={RED} $r>49.41</TCell>
                <TCell $c={YEL} $r>{v}</TCell>
                <TCell $c={GREEN} $r>{n ? 'S' : ''}</TCell>
                <TCell $c="#9a9a9a" $r>{n}</TCell>
              </TickRow>
            ))}
          </TickList>
        </QuoteCol>
      </Body>
      <StatusTabs>
        <STab $w={40}>扩展∧</STab>
        {sTabs.map(([t, y]) => <STab key={t} $y={y}>{t}</STab>)}
      </StatusTabs>
      <Ticker>
        <TickerUp><Chevron c="#e8e8e8" up /></TickerUp>
        <TName>上证</TName>
        <TNum $w={53}>3412.95</TNum><TNum $w={45}>-37.73</TNum><TNum $w={44}>-1.09%</TNum><TAmt $w={49}>3389亿</TAmt>
        <TName>深证</TName>
        <TNum $w={50}>13495.7</TNum><TNum $w={49}>-317.59</TNum><TNum $w={43}>-2.30%</TNum><TAmt $w={51}>4368亿</TAmt>
        <TName>中小</TName>
        <TNum $w={48}>8635.17</TNum><TNum $w={40}>-252.18</TNum>
      </Ticker>
      <Taskbar>
        <TaskSlot $w={48}><WinIcon /></TaskSlot>
        <TaskSlot $w={48}><CortanaIcon /></TaskSlot>
        <TaskSlot $w={48}><TaskViewIcon /></TaskSlot>
        <TaskDivider />
        <TaskSlot><ChromeIcon /></TaskSlot>
        <TaskSlot><EdgeIcon /></TaskSlot>
        <TaskSlot $on><FirefoxIcon /></TaskSlot>
        <TaskSlot $on><AppLogo s={23} id="logoT" /></TaskSlot>
        <TaskSlot $on><FolderIcon /></TaskSlot>
      </Taskbar>
      <Watermark>
        <WmTitle>公式指标网</WmTitle>
        <WmMark><WmLogo /></WmMark>
        <WmUrl>www.9m8.cn</WmUrl>
      </Watermark>
    </Page>
  );
}
